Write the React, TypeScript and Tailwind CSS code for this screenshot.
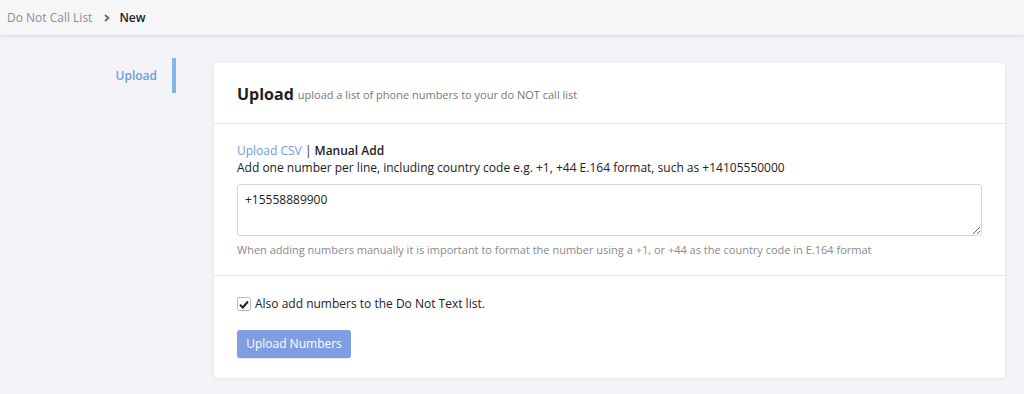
import React from "react";

export default function App() {
  return (
    <div
      className="min-h-[394px] bg-[#f3f3f8] text-[#333]"
      style={{ fontFamily: '"Open Sans", "Noto Sans", sans-serif' }}
    >
      <div className="h-[35px] bg-[#f6f6f9] flex items-center pl-[7px] shadow-[0_1px_4px_rgba(0,0,0,0.12)] relative z-10">
        <span className="text-[12px] text-[#8e8e8e]">Do Not Call List</span>
        <svg className="ml-[12px] mr-[9px]" width="6" height="8" viewBox="0 0 6 8">
          <path d="M1 1 L4.5 4 L1 7" fill="none" stroke="#666" strokeWidth="1.8" />
        </svg>
        <span className="text-[12px] font-semibold text-[#222]">New</span>
      </div>
      <div className="flex pt-[23px] pb-[16px]">
        <div className="w-[214px] shrink-0 flex justify-end pr-[38px]">
          <div className="h-[35px] flex items-center border-r-[4px] border-[#82b6e8] pr-[15px] text-[12px] font-semibold text-[#6e9ae2]">
            Upload
          </div>
        </div>
        <div className="mt-[5px] w-[791px] bg-white rounded-[4px] shadow-[0_1px_4px_rgba(0,0,0,0.08)]">
          <div className="h-[61px] px-[23px] flex items-center border-b border-[#e6e6ea] pt-[2px]">
            <span className="text-[16px] font-bold text-[#1e1e1e]">Upload</span>
            <span className="ml-[4px] text-[11px] text-[#777] mt-[2px]">
              upload a list of phone numbers to your do NOT call list
            </span>
          </div>
          <div className="px-[23px] pt-[18px] pb-[18px] border-b border-[#e6e6ea]">
            <div className="text-[12px] leading-[17px]">
              <span className="text-[#6f9be3]">Upload CSV</span>
              <span className="text-[#333]"> | </span>
              <span className="font-semibold text-[#222]">Manual Add</span>
            </div>
            <div className="text-[12px] leading-[17px] text-[#222]">
              Add one number per line, including country code e.g. +1, +44 E.164 format, such as +14105550000
            </div>
            <textarea
              className="mt-[8px] block w-full h-[52px] border border-[#d6d6d6] rounded-[3px] px-[7px] py-[6px] text-[12px] text-[#222] outline-none resize-y"
              defaultValue="+15558889900"
            />
            <div className="mt-[6px] text-[11px] leading-[15px] text-[#8a8a8a]">
              When adding numbers manually it is important to format the number using a +1, or +44 as the country code in E.164 format
            </div>
          </div>
          <div className="px-[23px] pt-[19px] pb-[20px]">
            <label className="flex items-center text-[12px] text-[#222]">
              <span className="w-[14px] h-[14px] border border-[#bdbdbd] rounded-[2px] bg-white flex items-center justify-center mr-[4px]">
                <svg width="10" height="9" viewBox="0 0 10 9">
                  <path d="M1 4.8 L3.8 7.5 L9 1.5" fill="none" stroke="#222" strokeWidth="2" />
                </svg>
              </span>
              Also add numbers to the Do Not Text list.
            </label>
            <button className="mt-[17px] h-[28px] w-[114px] rounded-[3px] bg-[#7e9de3] text-white text-[12px] font-medium shadow-[0_1px_1px_rgba(0,0,0,0.1)]">
              Upload Numbers
            </button>
          </div>
        </div>
      </div>
    </div>
  );
}
